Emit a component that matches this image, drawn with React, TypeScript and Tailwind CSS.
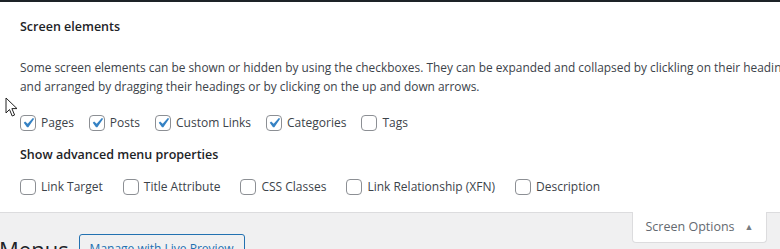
import React from "react";

const font = { fontFamily: '"Open Sans", "Noto Sans", sans-serif' };

function Box({ checked, label }: { checked?: boolean; label: string }) {
  return (
    <label className="flex items-center gap-[5px] text-[12px] leading-5 text-[#3c434a]">
      <span className="grid h-4 w-4 shrink-0 place-items-center rounded-[4px] border border-[#8c8f94] bg-white">
        {checked && (
          <svg viewBox="0 0 20 20" className="-m-[3px] h-[20px] w-[20px]">
            <path d="M14.83 4.89l1.34.94-5.81 8.38H9.02L5.78 9.67l1.34-1.25 2.57 2.4z" fill="#3582c4" />
          </svg>
        )}
      </span>
      <span>{label}</span>
    </label>
  );
}

function Cursor() {
  return (
    <svg className="pointer-events-none absolute left-[5px] top-[97px]" width="14" height="21" viewBox="0 0 14 21">
      <path d="M1 1 L1 16 L4.5 12.5 L7.2 19 L9.6 18 L6.9 11.6 L12 11.6 Z" fill="white" stroke="#222" strokeWidth="1" strokeLinejoin="round" />
    </svg>
  );
}

export default function App() {
  return (
    <div className="relative h-[249px] w-[780px] overflow-hidden bg-[#f0f0f1]" style={font}>
      <div className="border-t-2 border-b border-t-[#1d2327] border-b-[#dcdcde] bg-white px-5 pb-[15px] pt-[15px]">
        <h5 className="text-[12.5px] font-semibold leading-5 text-[#1d2327]">Screen elements</h5>
        <p className="mt-[21px] whitespace-nowrap text-[11.9px] leading-[19px] text-[#3c434a]">
          Some screen elements can be shown or hidden by using the checkboxes. They can be expanded and collapsed by clickling on their headings,
          <br />
          and arranged by dragging their headings or by clicking on the up and down arrows.
        </p>
        <div className="mt-[17px] flex items-center gap-[15px]">
          <Box checked label="Pages" />
          <Box checked label="Posts" />
          <Box checked label="Custom Links" />
          <Box checked label="Categories" />
          <Box label="Tags" />
        </div>
        <h5 className="mt-[12px] text-[12.5px] font-semibold leading-5 text-[#1d2327]">Show advanced menu properties</h5>
        <div className="mt-[12px] flex items-center gap-[20px]">
          <Box label="Link Target" />
          <Box label="Title Attribute" />
          <Box label="CSS Classes" />
          <Box label="Link Relationship (XFN)" />
          <Box label="Description" />
        </div>
      </div>
      <div className="flex items-start justify-between pr-[13px]">
        <div className="flex items-center gap-[10px] pt-[21px]">
          <h1 className="-ml-[1px] text-[22px] font-normal leading-[29px] text-[#1d2327]">Menus</h1>
          <span className="rounded-[3px] border border-[#2271b1] px-[10px] text-[12px] leading-[28px] text-[#2271b1]">
            Manage with Live Preview
          </span>
        </div>
        <div className="-mt-px flex h-[31px] w-[135px] items-center justify-center gap-[10px] rounded-b-[4px] border border-t-0 border-[#dcdcde] bg-white text-[12.5px] text-[#646970]">
          <span>Screen Options</span>
          <span className="text-[9px] text-[#787c82]">▲</span>
        </div>
      </div>
      <Cursor />
    </div>
  );
}
